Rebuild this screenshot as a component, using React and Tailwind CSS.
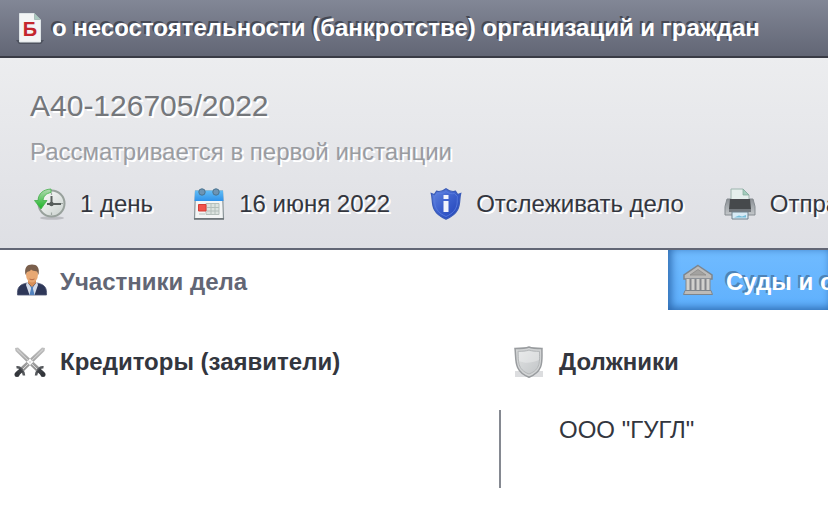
const CaseTypeIcon = () => (
  <svg className="h-8 w-8 shrink-0" viewBox="0 0 32 32" aria-hidden="true">
    <path d="M2 28h28l-3 4H5z" fill="#434753" opacity="0.7" />
    <path d="M5.500 1.500h15l6 6V30h-21z" fill="#f3f5f6" stroke="#dfe5e8" />
    <path d="M20.500 1.500v6h6z" fill="#a9c9bf" stroke="#8fa5a3" strokeWidth="0.600" />
    <text x="16" y="23.500" textAnchor="middle" fontSize="20" fontWeight="bold" fill="#c4262e">
      Б
    </text>
  </svg>
);

const ClockIcon = () => (
  <svg className="h-8 w-8 shrink-0" viewBox="0 0 32 32" aria-hidden="true">
    <defs>
      <linearGradient id="clockFace" x1="0" y1="0" x2="1" y2="1">
        <stop offset="0" stopColor="#ffffff" />
        <stop offset="1" stopColor="#c8d0cc" />
      </linearGradient>
      <linearGradient id="clockArrow" x1="0" y1="0" x2="0" y2="1">
        <stop offset="0" stopColor="#b5dab5" />
        <stop offset="1" stopColor="#18b522" />
      </linearGradient>
    </defs>
    <ellipse cx="18" cy="30" rx="12" ry="1.800" fill="#bcbdc2" />
    <circle cx="17.500" cy="15.500" r="13" fill="url(#clockFace)" stroke="#98a19c" strokeWidth="2" />
    <path d="M17.500 4.500V7M17.500 24.500V27M29 15.500h-2.500" stroke="#a0a8a4" strokeWidth="1.200" />
    <path d="M17.500 8v8M13 16h14" stroke="#59605d" strokeWidth="2" />
    <circle cx="17.500" cy="16" r="2.200" fill="#565e5a" />
    <path d="M17 1C9 1.500 4.500 5.500 4 12.500H.5L7 21l6-8.500H9C9.500 8 12 5.500 17 4.500z" fill="url(#clockArrow)" stroke="#43b04a" strokeWidth="0.800" />
  </svg>
);

const CalendarIcon = () => (
  <svg className="h-8 w-8 shrink-0" viewBox="0 0 32 32" aria-hidden="true">
    <defs>
      <linearGradient id="calTop" x1="0" y1="0" x2="0" y2="1">
        <stop offset="0" stopColor="#62bdf5" />
        <stop offset="1" stopColor="#2f92ea" />
      </linearGradient>
    </defs>
    <path d="M2.500 3h27l1 27.500h-29z" fill="#f3f5f5" stroke="#8b9599" strokeWidth="1.200" />
    <path d="M1 31h30" stroke="#666d70" strokeWidth="1.500" />
    <path d="M2 2.500h28l.5 10.500h-29z" fill="url(#calTop)" />
    <path d="M13 15.500h13v11H13z" fill="#dce3df" stroke="#b4bfbb" />
    <path d="M14 19.500h12M14 23h12M18 16v10M22 16v10" stroke="#b4bfbb" />
    <path d="M5.500 16.500H13v6.500H5.500z" fill="#f0524b" stroke="#d63c35" />
    <path d="M6 26h6" stroke="#b4bfbb" />
    <circle cx="9" cy="4" r="3.200" fill="#6c94b4" stroke="#4b7490" strokeWidth="1" />
    <circle cx="23" cy="4" r="3.200" fill="#6c94b4" stroke="#4b7490" strokeWidth="1" />
  </svg>
);

const TrackIcon = () => (
  <svg className="h-8 w-8 shrink-0" viewBox="0 0 32 32" aria-hidden="true">
    <defs>
      <linearGradient id="trackFill" x1="0" y1="0" x2="1" y2="1">
        <stop offset="0" stopColor="#6688df" />
        <stop offset="0.450" stopColor="#3f63cf" />
        <stop offset="1" stopColor="#1d3fb5" />
      </linearGradient>
    </defs>
    <path d="M16 .8c3 2.400 6 3.200 9.500 2.400l2.200 3.300 3-1C28.500 13 33 24 16 31.200-1 24 3.500 13 1.300 5.500l3 1 2.200-3.300C10 4 13 3.200 16 .8z" fill="url(#trackFill)" stroke="#3b5cb8" strokeWidth="1.200" />
    <path d="M16 3.500c3 2 5.500 2.700 8.500 2l3 3.200C26.500 13 30 22.500 16 28.500 2 22.500 5.500 13 4.500 8.700l3-3.200c3 .7 5.500 0 8.500-2z" fill="none" stroke="#5c7fe0" strokeWidth="0.800" />
    <path d="M13.500 7h5v4h-5zM13.500 13h5v11h-5z" fill="#f2f4fc" />
  </svg>
);

const PrinterIcon = () => (
  <svg className="h-8 w-8 shrink-0" viewBox="0 0 32 32" aria-hidden="true">
    <defs>
      <linearGradient id="printerBody" x1="0" y1="0" x2="0" y2="1">
        <stop offset="0" stopColor="#8c9196" />
        <stop offset="1" stopColor="#c3c7ca" />
      </linearGradient>
    </defs>
    <path d="M3 11h26l2 7.500V27H1v-8.500z" fill="url(#printerBody)" stroke="#858b90" />
    <path d="M7 13V1h12l6 6v6z" fill="#e4efec" stroke="#9db5ae" />
    <path d="M19 1v6h6z" fill="#a3cebd" stroke="#82aa9c" strokeWidth="0.700" />
    <path d="M6 11h20l1 10H5z" fill="#46494c" />
    <path d="M5 21h22v3H5z" fill="#74797e" />
    <path d="M8 24h16v7H8z" fill="#d7eaf5" stroke="#71818c" />
    <path d="M10 29.500l5-2 3 1 4-1.500v2.500z" fill="#76bdda" />
  </svg>
);

const PersonIcon = () => (
  <svg className="h-8 w-8 shrink-0" viewBox="0 0 32 32" aria-hidden="true">
    <path d="M1.500 31C1 24 3 20.500 11 19h10c8 1.500 10 5 9.500 12z" fill="#2e3758" stroke="#4b5371" strokeWidth="0.800" />
    <path d="M11 18l5 6 5-6 1 3-3.500 10h-5L10 21z" fill="#d4dcea" />
    <path d="M14.500 22h3l-.6 2.500L18.500 31h-5l1.600-6.500z" fill="#5282be" />
    <path d="M12 14h8v5l-4 4-4-4z" fill="#d89058" />
    <ellipse cx="16" cy="10.500" rx="6" ry="8" fill="#e8a873" />
    <path d="M9.500 11C8 3.500 11 .5 16 .5S24 3.500 22.500 11L21 7.500c-3-.5-5-1-6-2-.5 1.500-2.500 2-4 2.500z" fill="#7a5f4c" />
    <path d="M13.500 15q2.500 1.500 5 0" fill="none" stroke="#b96c47" />
  </svg>
);

const CourtIcon = () => (
  <svg className="h-8 w-8 shrink-0" viewBox="0 0 32 32" aria-hidden="true">
    <path d="M16 1.500L30 11v4H2v-4z" fill="#bcbbb9" stroke="#7d858d" strokeWidth="1.500" />
    <path d="M16 5.500l8 5.500H8z" fill="#a3a2a0" stroke="#8d8c89" strokeWidth="0.800" />
    <path d="M3.500 15h25v12h-25z" fill="#85868a" />
    <path d="M6 15v12M11 15v12M16 15v12M21 15v12M26 15v12" stroke="#d2d1ce" strokeWidth="3" />
    <path d="M3 26.500h26l1.500 4h-29z" fill="#bcbbb9" stroke="#7d858d" />
  </svg>
);

const SwordsIcon = () => (
  <svg className="h-8 w-8 shrink-0" viewBox="0 0 32 32" aria-hidden="true">
    <defs>
      <linearGradient id="blade" x1="0" y1="0" x2="0" y2="1">
        <stop offset="0" stopColor="#c2c2c2" />
        <stop offset="1" stopColor="#8e8e8e" />
      </linearGradient>
    </defs>
    <path d="M28 1.500l3 .5-.5 3L10 25l-3.500-3.500zM4 1.500L1 2l.5 3L22 25l3.500-3.500z" fill="url(#blade)" />
    <path d="M29 3.500L9 23M3 3.500L23 23" stroke="#dddddd" strokeWidth="1" />
    <path d="M2.500 21.500c3.500-1 7 3 7.500 8M29.500 21.500c-3.500-1-7 3-7.500 8" fill="none" stroke="#55585c" strokeWidth="2.500" />
    <path d="M7.500 24L3 28M24.500 24l4.500 4" stroke="#3c3f44" strokeWidth="4.500" />
    <circle cx="3" cy="28.500" r="2.500" fill="#33363b" />
    <circle cx="29" cy="28.500" r="2.500" fill="#33363b" />
  </svg>
);

const ShieldIcon = () => (
  <svg className="h-8 w-8 shrink-0" viewBox="0 0 32 32" aria-hidden="true">
    <defs>
      <linearGradient id="shieldFill" x1="0" y1="0" x2="1" y2="1">
        <stop offset="0" stopColor="#dfe1e2" />
        <stop offset="1" stopColor="#c3c6c8" />
      </linearGradient>
    </defs>
    <path d="M2 25h28v6H2z" fill="#dcdddf" />
    <path d="M16 1c3 1.200 8 1.500 13 1.500C28.500 13 32 25 16 31.200 0 25 3.500 13 2 2.500 8 2.500 13 2.200 16 1z" fill="#d2d4d5" stroke="#999c9f" strokeWidth="1.500" />
    <path d="M16 4c3 1 6.500 1.300 10.500 1.300C26.500 15 28 23.500 16 28 4 23.500 5.500 15 5 5.300 9.500 5.300 13 5 16 4z" fill="url(#shieldFill)" stroke="#b3b6b8" />
    <path d="M6 15c7 3 12 2 20-1V6c-4 0-7 0-10-1-3 1-6 1-10 1z" fill="#ffffff" opacity="0.300" />
  </svg>
);

const actionClass =
  "flex shrink-0 items-center gap-3.5 whitespace-nowrap text-[#33363e] [text-shadow:2px_2px_0_#ffffff]";

const CaseSummary = () => (
  <section className="flex flex-col border-b-2 border-[#626675] bg-linear-to-b from-[#ecedef] to-[#dedfe4] pt-7 pb-[26px]">
    <h2 className="px-[30px] text-[30px] leading-10 text-[#74777b] [text-shadow:2px_2px_0_#ffffff]">А40-126705/2022</h2>
    <p className="mt-3 px-[30px] leading-7 text-[#9a9ca1] [text-shadow:2px_2px_0_#ffffff]">
      Рассматривается в первой инстанции
    </p>
    <div className="mt-5 flex gap-10 overflow-hidden pl-[34px] leading-9">
      <span className={actionClass}>
        <ClockIcon /> 1 день
      </span>
      <span className={actionClass}>
        <CalendarIcon /> 16 июня 2022
      </span>
      <button type="button" className={actionClass}>
        <TrackIcon /> Отслеживать дело
      </button>
      <button type="button" className={actionClass}>
        <PrinterIcon /> Отправить
      </button>
    </div>
  </section>
);

const Tabs = () => (
  <nav className="flex h-[60px]">
    <button type="button" className="flex min-w-0 flex-1 items-center gap-3 px-4 font-bold text-[#626675]">
      <PersonIcon />
      <span className="pt-1">Участники дела</span>
    </button>
    <button
      type="button"
      className="flex w-40 items-center gap-3 overflow-hidden bg-linear-to-b from-[#70bbff] to-[#5fb0fd] pl-3.5 font-bold whitespace-nowrap text-white shadow-[inset_3px_-2px_8px_#2b67ac] [text-shadow:-2px_-2px_0_#4d83b8]"
    >
      <CourtIcon />
      <span className="pt-1">Суды и судебные акты</span>
    </button>
  </nav>
);

const Participants = () => (
  <section className="grid grid-cols-[minmax(0,1fr)_329px] pt-8 text-[#33363e]">
    <h3 className="flex items-center gap-3.5 pl-3.5 leading-10 font-bold">
      <SwordsIcon /> Кредиторы (заявители)
    </h3>
    <h3 className="flex items-center gap-3.5 pl-3.5 leading-10 font-bold">
      <ShieldIcon /> Должники
    </h3>
    <div />
    <div className="mt-7 border-l-2 border-[#858991] pb-[38px] pl-[58px] leading-10">ООО "ГУГЛ"</div>
  </section>
);

export default function App() {
  return (
    <main className="min-h-screen overflow-hidden bg-white font-['Liberation_Sans',Arial,sans-serif] text-2xl">
      <header className="flex h-[58px] items-center gap-1.5 border-b-2 border-[#393b45] bg-linear-to-b from-[#828796] to-[#626675] px-3.5">
        <CaseTypeIcon />
        <h1 className="font-bold whitespace-nowrap text-white [text-shadow:-2px_-2px_0_#454955]">
          о несостоятельности (банкротстве) организаций и граждан
        </h1>
      </header>
      <CaseSummary />
      <Tabs />
      <Participants />
    </main>
  );
}
